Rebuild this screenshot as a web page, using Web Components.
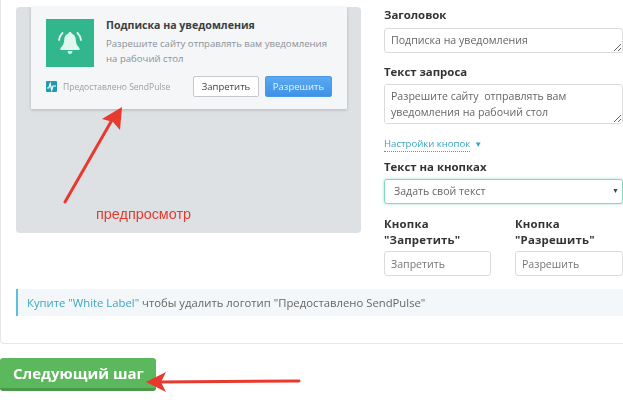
<!DOCTYPE html>
<html>
<head>
<meta charset="utf-8">
<style>
    html, body { margin: 0; padding: 0; background: #fff; overflow: hidden; }
    body { width: 623px; height: 400px; font-family: "Open Sans", "Liberation Sans", sans-serif; color: #333; }
</style>
</head>
<body>
<sp-wizard>
    <sp-preview slot="preview" title="Подписка на уведомления" text="Разрешите сайту отправлять вам уведомления на рабочий стол" deny="Запретить" allow="Разрешить"></sp-preview>
    <sp-form slot="form"></sp-form>
    <sp-note slot="note"><a>Купите "White Label"</a> чтобы удалить логотип "Предоставлено SendPulse"</sp-note>
</sp-wizard>
<script>
class SpWizard extends HTMLElement {
    constructor() {
        super();
        this.attachShadow({ mode: 'open' });
        this.shadowRoot.innerHTML = `
            <style>
                :host { display: block; position: relative; width: 623px; height: 400px; overflow: hidden; filter: blur(.3px); }
                .panel {
                    height: 344px;
                    box-sizing: border-box;
                    width: 640px;
                    padding: 7px 0 0 15px;
                    border: 1px solid #e4e6e8;
                    border-top: 0;
                    border-radius: 0 0 4px 4px;
                }
                .cols { display: flex; height: 282px; box-sizing: border-box; }
                .left { width: 345px; flex: none; margin-right: 23px; }
                .right { width: 239px; flex: none; }
                .note { width: 607px; }
                .next {
                    display: block;
                    margin-top: 14px;
                    width: 156px;
                    height: 33px;
                    box-sizing: border-box;
                    padding: 0 0 0 13px;
                    border: 0;
                    border-bottom: 3px solid #4a9a4a;
                    border-radius: 3px;
                    background: #5cb85c;
                    color: #fff;
                    font: 700 15px/30px "Open Sans", sans-serif;
                    text-align: left;
                }
                svg { position: absolute; left: 0; top: 0; pointer-events: none; }
                .caption {
                    position: absolute;
                    left: 96px;
                    top: 205px;
                    color: #e8392f;
                    font: 14.4px/18px "Liberation Sans", Arial, sans-serif;
                }
            </style>
            <div class="panel">
                <div class="cols">
                    <div class="left"><slot name="preview"></slot></div>
                    <div class="right"><slot name="form"></slot></div>
                </div>
                <div class="note"><slot name="note"></slot></div>
            </div>
            <button class="next">Следующий шаг</button>
            <svg width="623" height="400" viewBox="0 0 623 400">
                <line x1="65" y1="202" x2="112" y2="120" stroke="#e8392f" stroke-width="3" stroke-linecap="round"/>
                <polygon points="122,107 102,119 113,122 120,130" fill="#e8392f"/>
                <line x1="299" y1="381" x2="160" y2="382" stroke="#e8392f" stroke-width="3" stroke-linecap="round"/>
                <polygon points="146,382 166,372 161,382 166,392" fill="#e8392f"/>
            </svg>
            <div class="caption">предпросмотр</div>
        `;
    }
}

class SpPreview extends HTMLElement {
    constructor() {
        super();
        this.attachShadow({ mode: 'open' });
    }

    connectedCallback() {
        this.shadowRoot.innerHTML = `
            <style>
                :host {
                    display: block;
                    height: 226px;
                    background: #dde1e3;
                    border-radius: 4px;
                    padding: 0 14px 0 15px;
                    box-sizing: border-box;
                }
                .card {
                    height: 102px;
                    box-sizing: border-box;
                    background: #f4f6f8;
                    box-shadow: 0 1px 3px rgba(0,0,0,.2);
                    padding: 12px 15px 0;
                }
                .top { display: flex; gap: 12px; }
                .icon {
                    width: 48px;
                    height: 48px;
                    flex: none;
                    background: #32b68c;
                    display: flex;
                    align-items: center;
                    justify-content: center;
                }
                h4 { margin: 0; margin-top: -1px; font-size: 10.6px; line-height: 14px; font-weight: 700; color: #3a3f44; }
                p { margin: 5px 0 0; font-size: 9.6px; line-height: 14.5px; color: #8b9298; }
                .bottom { display: flex; align-items: center; margin-top: 9px; }
                .brand { display: flex; align-items: center; gap: 6px; flex: 1; font-size: 8.5px; color: #9a9fa4; white-space: nowrap; }
                .btn {
                    height: 21px;
                    box-sizing: border-box;
                    border-radius: 2px;
                    font-size: 9.5px;
                    line-height: 19px;
                    text-align: center;
                }
                .deny { width: 66px; background: #fff; border: 1px solid #c4c8cc; color: #444; margin-right: 6px; }
                .allow { width: 67px; background: linear-gradient(#5aaaf2, #3e92e6); border: 1px solid #4a9ae8; color: #eaf4ff; }
            </style>
            <div class="card">
                <div class="top">
                    <div class="icon">
                        <svg width="26" height="24" viewBox="0 0 26 24">
                            <path d="M13 1c1 0 1.500.6 1.600 1.500 2.800.8 4 3.200 4.200 6.300.2 3.700 1.200 6 3.700 8.200v2H3.500v-2C6 14.800 7 12.500 7.200 8.800c.2-3.100 1.400-5.500 4.200-6.300C11.500 1.600 12 1 13 1z" fill="#e0f7ee"/>
                            <path d="M10.500 20h5c-.2 1.800-1.200 3-2.500 3s-2.300-1.200-2.500-3z" fill="#e0f7ee"/>
                            <path d="M5.500 2C3.700 3.800 2.500 6.200 2 9M20.500 2C22.300 3.800 23.500 6.200 24 9" fill="none" stroke="#e0f7ee" stroke-width="1.800" stroke-linecap="round"/>
                        </svg>
                    </div>
                    <div>
                        <h4>${this.getAttribute('title')}</h4>
                        <p>${this.getAttribute('text')}</p>
                    </div>
                </div>
                <div class="bottom">
                    <div class="brand">
                        <svg width="11" height="11" viewBox="0 0 11 11">
                            <rect width="11" height="11" rx="1" fill="#1d9bb0"/>
                            <path d="M1 7h1.800l1.400-4.500 1.500 6.500 1.300-4H10" fill="none" stroke="#fff" stroke-width="1.200"/>
                        </svg>
                        Предоставлено SendPulse
                    </div>
                    <div class="btn deny">${this.getAttribute('deny')}</div>
                    <div class="btn allow">${this.getAttribute('allow')}</div>
                </div>
            </div>
        `;
    }
}

class SpForm extends HTMLElement {
    constructor() {
        super();
        this.attachShadow({ mode: 'open' });
        this.shadowRoot.innerHTML = `
            <style>
                :host { display: block; font-size: 10.5px; color: #555; }
                label { display: block; font-size: 11.4px; line-height: 16px; font-weight: 700; color: #333; }
                textarea, input, .select {
                    display: block;
                    width: 100%;
                    box-sizing: border-box;
                    margin: 0;
                    border: 1px solid #d8dcdf;
                    border-radius: 3px;
                    background: #fff;
                    font: 10.6px/16px "Open Sans", sans-serif;
                    color: #666;
                    padding: 4px 6px;
                    outline: none;
                }
                .t1 { height: 25px; margin-top: 5px; padding-top: 3px; }
                .t2 { height: 40px; margin-top: 4px; padding-top: 3px; }
                .l2 { margin-top: 11px; }
                .link {
                    display: inline-block;
                    margin-top: 13px;
                    color: #3aa6bf;
                    font-size: 9.6px;
                    line-height: 14px;
                    border-bottom: 1px dotted #3aa6bf;
                }
                .caret { color: #3aa6bf; font-size: 8px; margin-left: 4px; vertical-align: 0; }
                .l3 { margin-top: 7px; }
                .select {
                    margin-top: 4px;
                    height: 25px;
                    border-color: #7fdcc0;
                    box-shadow: 0 0 3px rgba(80,210,170,.6);
                    padding: 3px 3px 3px 9px;
                    display: flex;
                    justify-content: space-between;
                    color: #666;
                }
                .select i { font-style: normal; font-size: 7px; color: #444; }
                .row { display: flex; gap: 24px; margin-top: 12px; }
                .row > div { width: 107px; flex: none; }
                .row > div + div { width: 108px; }
                .row label { line-height: 16px; letter-spacing: .2px; }
                input { height: 25px; margin-top: 3px; }
                input::placeholder { color: #777; }
            </style>
            <label>Заголовок</label>
            <textarea class="t1">Подписка на уведомления</textarea>
            <label class="l2">Текст запроса</label>
            <textarea class="t2">Разрешите сайту  отправлять вам уведомления на рабочий стол</textarea>
            <span class="link">Настройки кнопок</span><span class="caret">&#9660;</span>
            <label class="l3">Текст на кнопках</label>
            <div class="select"><span>Задать свой текст</span><i>&#9660;</i></div>
            <div class="row">
                <div><label>Кнопка<br>"Запретить"</label><input placeholder="Запретить"></div>
                <div><label>Кнопка<br>"Разрешить"</label><input placeholder="Разрешить"></div>
            </div>
        `;
    }
}

class SpNote extends HTMLElement {
    constructor() {
        super();
        this.attachShadow({ mode: 'open' });
        this.shadowRoot.innerHTML = `
            <style>
                :host {
                    display: block;
                    height: 27px;
                    box-sizing: border-box;
                    background: #f3f7fa;
                    border-left: 2px solid #5bc0de;
                    padding-left: 9px;
                    font-size: 11.3px;
                    line-height: 27px;
                    color: #666;
                    white-space: nowrap;
                }
                ::slotted(a) { color: #3aa6bf; }
            </style>
            <slot></slot>
        `;
    }
}

customElements.define('sp-wizard', SpWizard);
customElements.define('sp-preview', SpPreview);
customElements.define('sp-form', SpForm);
customElements.define('sp-note', SpNote);
</script>
</body>
</html>
